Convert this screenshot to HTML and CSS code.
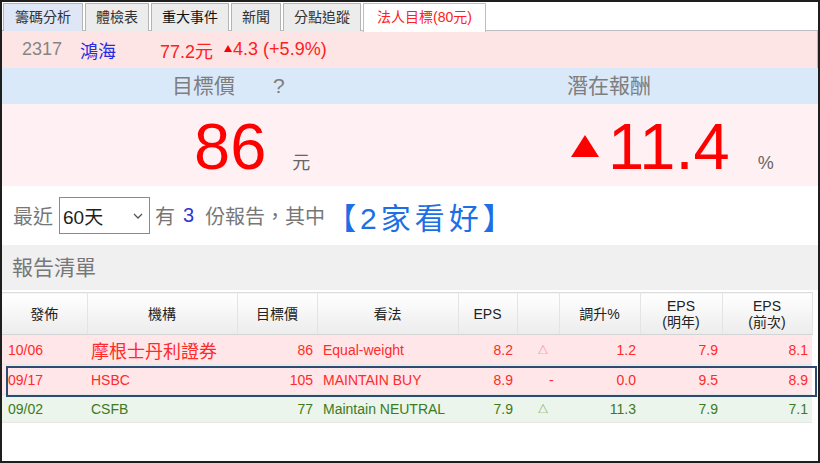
FILE: index.html
```html
<!DOCTYPE html>
<html lang="zh-Hant">
<head>
    <meta charset="UTF-8">
    <title>法人目標</title>
    <link rel="stylesheet" href="styles.css">
</head>
<body>
<div class="frame">
    <ul class="tabs">
        <li class="tab tab-first">籌碼分析</li>
        <li class="tab">體檢表</li>
        <li class="tab tab-strong">重大事件</li>
        <li class="tab">新聞</li>
        <li class="tab">分點追蹤</li>
        <li class="tab tab-active">法人目標(80元)</li>
    </ul>

    <div class="quote">
        <span class="code">2317</span>
        <span class="name">鴻海</span>
        <span class="price">77.2元</span>
        <span class="change"><i class="tri-s"></i>4.3 (+5.9%)</span>
    </div>

    <div class="sum-head">
        <div class="half left"><span>目標價</span><span class="ask">?</span></div>
        <div class="half right"><span>潛在報酬</span></div>
    </div>
    <div class="sum-body">
        <div class="half left">
            <span class="big">86</span><span class="unit unit-yuan">元</span>
        </div>
        <div class="half right">
            <svg class="tri-big" width="28" height="22" viewBox="0 0 28 22"><polygon points="14,0 28,22 0,22" fill="#ff0000"/></svg>
            <span class="big">11.4</span><span class="unit unit-pct">%</span>
        </div>
    </div>

    <div class="filter">
        <span class="muted">最近</span>
        <div class="select">60天<svg class="chev" width="10" height="6" viewBox="0 0 10 6"><polyline points="1,1 5,5 9,1" fill="none" stroke="#555" stroke-width="1.3"/></svg></div>
        <span class="muted">有</span>
        <span class="count">3</span>
        <span class="muted">份報告，其中</span>
        <span class="good">【2家看好】</span>
    </div>

    <div class="list-title">報告清單</div>

    <div class="table-wrap">
        <table class="reports">
            <thead>
            <tr>
                <th class="c-date">發佈</th>
                <th class="c-org">機構</th>
                <th class="c-tp">目標價</th>
                <th class="c-view">看法</th>
                <th class="c-eps">EPS</th>
                <th class="c-mark"></th>
                <th class="c-up">調升%</th>
                <th class="c-next">EPS<br>(明年)</th>
                <th class="c-prev">EPS<br>(前次)</th>
            </tr>
            </thead>
            <tbody>
            <tr class="row-red">
                <td class="t-left">10/06</td>
                <td class="t-org org-big">摩根士丹利證券</td>
                <td class="t-num">86</td>
                <td class="t-view">Equal-weight</td>
                <td class="t-num">8.2</td>
                <td class="t-mark">△</td>
                <td class="t-num">1.2</td>
                <td class="t-num">7.9</td>
                <td class="t-num">8.1</td>
            </tr>
            <tr class="row-red">
                <td class="t-left">09/17</td>
                <td class="t-org">HSBC</td>
                <td class="t-num">105</td>
                <td class="t-view">MAINTAIN BUY</td>
                <td class="t-num">8.9</td>
                <td class="t-mark mark-dash">-</td>
                <td class="t-num">0.0</td>
                <td class="t-num">9.5</td>
                <td class="t-num">8.9</td>
            </tr>
            <tr class="row-green">
                <td class="t-left">09/02</td>
                <td class="t-org">CSFB</td>
                <td class="t-num">77</td>
                <td class="t-view">Maintain NEUTRAL</td>
                <td class="t-num">7.9</td>
                <td class="t-mark">△</td>
                <td class="t-num">11.3</td>
                <td class="t-num">7.9</td>
                <td class="t-num">7.1</td>
            </tr>
            </tbody>
        </table>
        <div class="focus"></div>
    </div>
</div>
</body>
</html>
```

FILE: styles.css
```css
* {
    box-sizing: border-box;
}

body {
    margin: 0;
    font-family: "Liberation Sans", "Noto Sans CJK TC", sans-serif;
    background: #fff;
}

.frame {
    width: 820px;
    height: 463px;
    border: 2px solid #1e1e1e;
    overflow: hidden;
    background: #fff;
}

/* tabs */
.tabs {
    display: flex;
    list-style: none;
    margin: 0;
    padding: 1px 0 0 1px;
    height: 29px;
    border-bottom: 1px solid #bdbdc4;
}

.tab {
    height: 28px;
    line-height: 26px;
    padding: 0 10px;
    margin-right: 2px;
    font-size: 14px;
    color: #333;
    background: #ececec;
    border: 1px solid #b4b4b4;
    border-bottom: none;
}

.tab-first {
    background: #dfe6f6;
    padding: 0 11px;
}

.tab-strong {
    color: #111;
}

.tab-active {
    background: #fff;
    color: #ff2020;
    padding: 0 13px;
    height: 29px;
    margin-bottom: -1px;
    border-color: #bdbdc4;
}

/* quote row */
.quote {
    display: flex;
    align-items: center;
    height: 37px;
    padding-left: 20px;
    background: #fde5e5;
    border-right: 1px solid #b8b8c2;
    font-size: 18px;
}

.code {
    color: #858585;
}

.name {
    color: #2a2ae0;
    margin-left: 18px;
}

.price {
    color: #ff2020;
    margin-left: 44px;
}

.change {
    color: #ff2020;
    margin-left: 11px;
    display: flex;
    align-items: center;
}

.tri-s {
    display: inline-block;
    width: 0;
    height: 0;
    border-left: 4px solid transparent;
    border-right: 4px solid transparent;
    border-bottom: 7px solid #ff0000;
    margin-right: 1px;
    margin-top: -2px;
}

/* summary */
.sum-head,
.sum-body {
    display: flex;
}

.half.left {
    width: 408px;
}

.half.right {
    flex: 1;
}

.sum-head {
    height: 36px;
    background: #d9e9f9;
    color: #7e7e7e;
    font-size: 21px;
    line-height: 36px;
}

.sum-head .left {
    padding-left: 170px;
}

.sum-head .ask {
    margin-left: 38px;
}

.sum-head .right {
    padding-left: 157px;
}

.sum-body {
    height: 82px;
    background: #fff0f4;
}

.sum-body .half {
    display: flex;
    align-items: baseline;
    padding-top: 10px;
}

.sum-body .left {
    padding-left: 192px;
}

.sum-body .right {
    padding-left: 161px;
}

.big {
    font-size: 65px;
    line-height: 66px;
    color: #ff0000;
}

.unit {
    color: #666;
    font-size: 18px;
}

.unit-yuan {
    margin-left: 26px;
}

.unit-pct {
    margin-left: 28px;
}

.tri-big {
    align-self: flex-start;
    margin: 21px 9px 0 0;
}

/* filter row */
.filter {
    display: flex;
    align-items: center;
    height: 59px;
    padding-left: 11px;
    font-size: 20px;
}

.muted {
    color: #777;
}

.select {
    display: flex;
    align-items: center;
    justify-content: space-between;
    width: 91px;
    height: 37px;
    margin: 0 5px 0 6px;
    padding: 0 6px 0 3px;
    border: 1px solid #8a8a8a;
    color: #222;
    font-size: 19px;
}

.count {
    color: #3434d0;
    margin: 0 11px 0 8px;
}

.good {
    color: #1d6fe6;
    font-size: 30px;
    letter-spacing: 4px;
    margin-left: 1px;
}

/* list */
.list-title {
    height: 45px;
    line-height: 45px;
    padding-left: 10px;
    background: #f0f0f0;
    color: #777;
    font-size: 21px;
}

.table-wrap {
    position: relative;
    margin-top: 2px;
}

.reports {
    width: 810px;
    border-collapse: collapse;
    table-layout: fixed;
    font-size: 14px;
}

.reports th {
    height: 42px;
    font-weight: normal;
    color: #222;
    line-height: 16px;
    background: linear-gradient(#ffffff, #ececec);
    border-top: 1px solid #dcdcdc;
    border-bottom: 1px solid #d4d4d4;
    border-right: 1px solid #e4e4e4;
}

.c-date { width: 85px; }
.c-org { width: 150px; }
.c-tp { width: 80px; }
.c-view { width: 141px; }
.c-eps { width: 59px; }
.c-mark { width: 42px; }
.c-up { width: 81px; }
.c-next { width: 82px; }
.c-prev { width: 90px; }

.reports td {
    height: 30px;
    padding: 0;
    white-space: nowrap;
    border-bottom: 1px solid #e6e6e6;
}

.row-red td {
    background: #ffe6e8;
    color: #ff2a2a;
}

.row-green td {
    background: #ebf5eb;
    color: #3d7a22;
    height: 28px;
}

.t-left {
    padding-left: 6px !important;
}

.t-org {
    padding-left: 4px !important;
}

.org-big {
    font-size: 18px;
}

.t-num {
    text-align: right;
    padding-right: 4px !important;
}

.t-view {
    padding-left: 6px !important;
}

.t-mark {
    font-size: 10px;
    padding-left: 21px !important;
}

.row-red .t-mark {
    color: #f27a7a;
}

.row-green .t-mark {
    color: #5a9a48;
}

.mark-dash {
    font-size: 14px;
    padding-left: 32px !important;
}

.row-red .mark-dash {
    color: #ff2a2a;
}

.focus {
    position: absolute;
    left: 4px;
    top: 74px;
    width: 811px;
    height: 31px;
    border: 2px solid #2e4a70;
}
```
